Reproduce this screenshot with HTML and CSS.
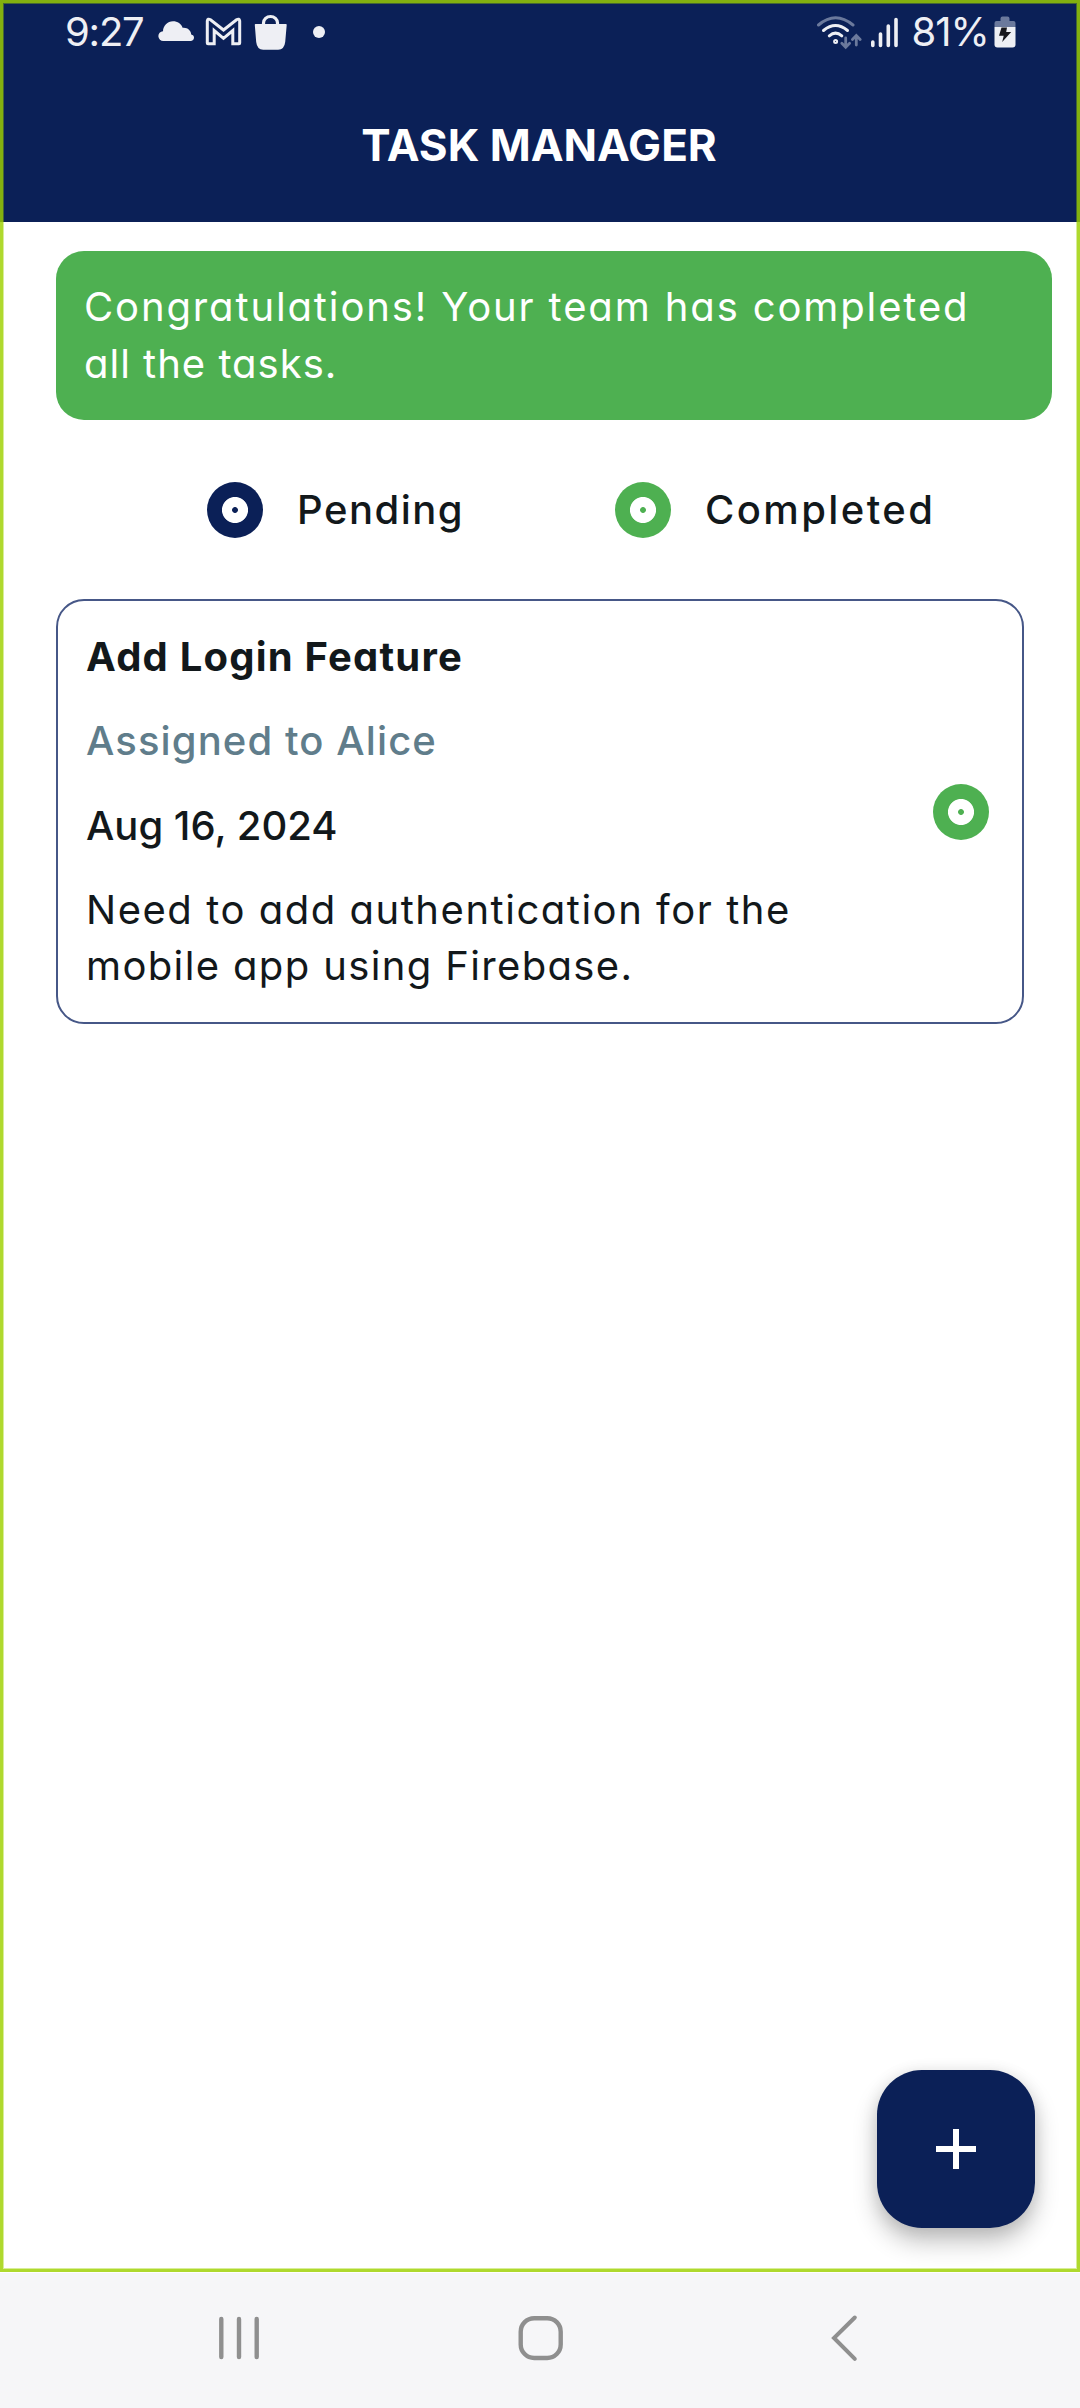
FILE: index.html
```html
<!DOCTYPE html>
<html lang="en">
<head>
<meta charset="utf-8">
<title>Task Manager</title>
<link rel="stylesheet" href="styles.css">
</head>
<body>
<div class="screen">
  <div class="app">
    <header class="header">
      <div class="status">
        <span class="status-text clock">9:27</span>
        <svg class="status-left" width="172" height="40" viewBox="156 12 172 40" fill="#eeeff4">
          <path d="M163.500 41a4.500 4.500 0 0 1-.5-9.800C163 26 167.500 21.300 173 21.300c4.600 0 8.300 2.600 9.600 6.500 4.600-.6 8.400 2.400 8.600 6.600 1.800.3 2.800 1.500 2.800 3.200 0 2-1.400 3.400-3.500 3.400z"/>
          <path d="M207.300 43V21q.4-3 3.200-1.200l13 10.200 13-10.200q2.800-1.800 3.200 1.200v22q0 .7-.7.700h-6.200V30.500l-9.300 7.800-9.300-7.800v13.200h-6.200q-.7 0-.7-.7z" fill="none" stroke="#eeeff4" stroke-width="3"/>
          <path d="M263.500 25v-2a7 6.500 0 0 1 14 0v2" fill="none" stroke="#eeeff4" stroke-width="3.200"/>
          <path d="M255.500 24h30.500q.8 0 .7 1l-1.500 17q-.8 7.500-7 7.700h-15q-6.200-.2-7-7.700l-1.400-17q-.1-1 .7-1z"/>
          <circle cx="319" cy="32" r="6"/>
        </svg>
        <svg class="status-right" width="84" height="40" viewBox="814 12 84 40" fill="none" stroke="#eeeff4" stroke-width="3" stroke-linecap="round">
          <g stroke="#6b799c">
            <path d="M817.500 25Q834.500 10.500 852 25"/>
            <path d="M844.700 38v9M840.800 43.300l3.900 4 3.900-4M855.300 45v-9M851.400 39.500l3.900-4 3.900 4" stroke-width="2.800"/>
          </g>
          <path d="M822.500 30.500Q834.500 20.500 846.500 30.500M828.300 35.800Q834.500 30.500 840.800 35.800"/>
          <circle cx="834.600" cy="41.500" r="1" />
          <path d="M871.800 42v3.500M879.500 34v11.500M887.300 26v19.500M895 19.500v26" stroke-width="3.600"/>
        </svg>
        <span class="status-text percent">81%</span>
        <svg width="22" height="34" viewBox="993.500 15 22 34">
          <path d="M994 27v-4q0-2 2-2h4v-2.500q0-2 2-2h5q2 0 2 2V21h4q2 0 2 2v4z" fill="#6b799c"/>
          <path d="M994 27h21v17.500q0 3-3 3h-15q-3 0-3-3z" fill="#eeeff4"/>
          <path d="M1001 27.500h5.500l-.8 4.500h5l-9 10 1.500-6.300h-4.700z" fill="#17171c"/>
        </svg>
      </div>
      <h1 class="title">TASK MANAGER</h1>
    </header>

    <main class="content">
      <div class="banner">
        <div class="banner-first">Congratulations! Your team has completed</div>
        <div class="banner-second">all the tasks.</div>
      </div>

      <div class="legend">
        <div class="legend-item"><i class="marker"></i><span class="pending">Pending</span></div>
        <div class="legend-item"><i class="marker done"></i><span class="completed">Completed</span></div>
      </div>

      <article class="card">
        <div class="card-body">
          <h2 class="task">Add Login Feature</h2>
          <div class="assignee">Assigned to Alice</div>
          <div class="date">Aug 16, 2024</div>
          <div class="note">
            <div class="note-first">Need to add authentication for the</div>
            <div class="note-second">mobile app using Firebase.</div>
          </div>
        </div>
        <i class="marker done"></i>
      </article>
    </main>

    <button class="fab" aria-label="Add task">
      <svg width="40" height="40" viewBox="0 0 40 40" stroke="#fff" stroke-width="6"><path d="M20 0v40M0 20h40"/></svg>
    </button>
    <div class="frame"></div>
  </div>

  <nav class="navbar">
    <svg width="42" height="46" viewBox="218 2315 42 46" fill="none" stroke="#8f8f8f" stroke-width="4.400" stroke-linecap="round"><path d="M221.300 2319v38M239 2319v38M256.700 2319v38"/></svg>
    <svg class="home" width="46" height="46" viewBox="518 2315 46 46" fill="none" stroke="#8f8f8f" stroke-width="4.400"><rect x="520.700" y="2318.200" width="40" height="39.800" rx="13.500"/></svg>
    <svg width="28" height="48" viewBox="831 2314 28 48" fill="none" stroke="#8f8f8f" stroke-width="4" stroke-linecap="round"><path d="M854.800 2317.500L834 2338l20.800 20.800"/></svg>
  </nav>
</div>
</body>
</html>
```
FILE: styles.css
```css
* { box-sizing: border-box; margin: 0; padding: 0; }

body {
  width: 1080px;
  background: #fff;
  color: #12181b;
  font-family: Inter, "Noto Sans", sans-serif;
  font-size: 40px;
  line-height: 56px;
  font-feature-settings: "cv11";
  white-space: nowrap;
}

svg { display: block; flex: none; }

.screen { display: flex; flex-direction: column; height: 2408px; }

.app {
  position: relative;
  display: flex;
  flex-direction: column;
  height: 2272px;
}

.header { height: 222px; background: #0b2057; color: #fff; }

.status {
  display: flex;
  align-items: center;
  height: 64px;
  padding: 0 64px 0 65px;
}

.status-text { font-size: 40px; line-height: 64px; color: #eeeff4; }
.clock { width: 91px; letter-spacing: -1.2px; }
.status-right { margin-left: auto; margin-right: 13px; }
.percent { width: 82.500px; letter-spacing: -1px; }

.title {
  padding: 53px 2px 0 0;
  text-align: center;
  font-size: 44px;
  line-height: 56px;
  font-weight: 700;
}

.content { padding: 29px 56px 0; }

.banner {
  width: 996px;
  height: 169px;
  padding: 27px 28px;
  border-radius: 28px;
  background: #4eb051;
  color: #fff;
  line-height: 57px;
}

.banner-first { letter-spacing: 1.87px; }
.banner-second { letter-spacing: 1px; }

.legend { display: flex; padding: 62px 0 61px 151px; }
.legend-item { display: flex; align-items: center; gap: 34px; height: 56px; }
.legend-item:first-child { width: 408px; }
.legend-item, .assignee, .date { font-weight: 500; }
.pending { letter-spacing: 1.5px; }
.completed { letter-spacing: 2.4px; }

.marker {
  flex: none;
  width: 56px;
  height: 56px;
  border-radius: 50%;
  background: radial-gradient(circle, #0b2057 2.500px, #fff 3.300px, #fff 12.600px, #0b2057 13.400px);
}

.marker.done {
  background: radial-gradient(circle, #4eb051 2.500px, #fff 3.300px, #fff 12.600px, #4eb051 13.400px);
}

.card {
  display: flex;
  align-items: center;
  justify-content: space-between;
  width: 968px;
  height: 425px;
  padding: 0 33px 0 28px;
  border: 2px solid #465787;
  border-radius: 28px;
}

.card-body { display: flex; flex-direction: column; gap: 28.500px; }
.task { font-size: 40px; font-weight: 700; letter-spacing: 1.2px; }
.assignee { color: #607d8b; letter-spacing: 1.1px; }
.date { letter-spacing: 0; }
.note-first { letter-spacing: 1.53px; }
.note-second { letter-spacing: 1.36px; }

.fab {
  position: absolute;
  left: 877px;
  top: 2070px;
  display: flex;
  align-items: center;
  justify-content: center;
  width: 158px;
  height: 158px;
  border: 0;
  border-radius: 45px;
  background: #0b2057;
  box-shadow: 0 14px 24px rgba(0, 0, 0, 0.24), 0 2px 16px rgba(0, 0, 0, 0.1);
}

/* Focus outline drawn over the whole app area */
.frame {
  position: absolute;
  inset: 0;
  border: 3px solid rgba(157, 209, 0, 0.82);
  box-shadow: inset 0 0 0 1px rgba(157, 209, 0, 0.4);
  pointer-events: none;
}

.navbar {
  display: flex;
  align-items: center;
  justify-content: space-between;
  height: 136px;
  padding: 0 221px 5px 218px;
  border-top: 1px solid #fff;
  background: #f6f6f8;
}

.home { margin-right: 9px; }
```
